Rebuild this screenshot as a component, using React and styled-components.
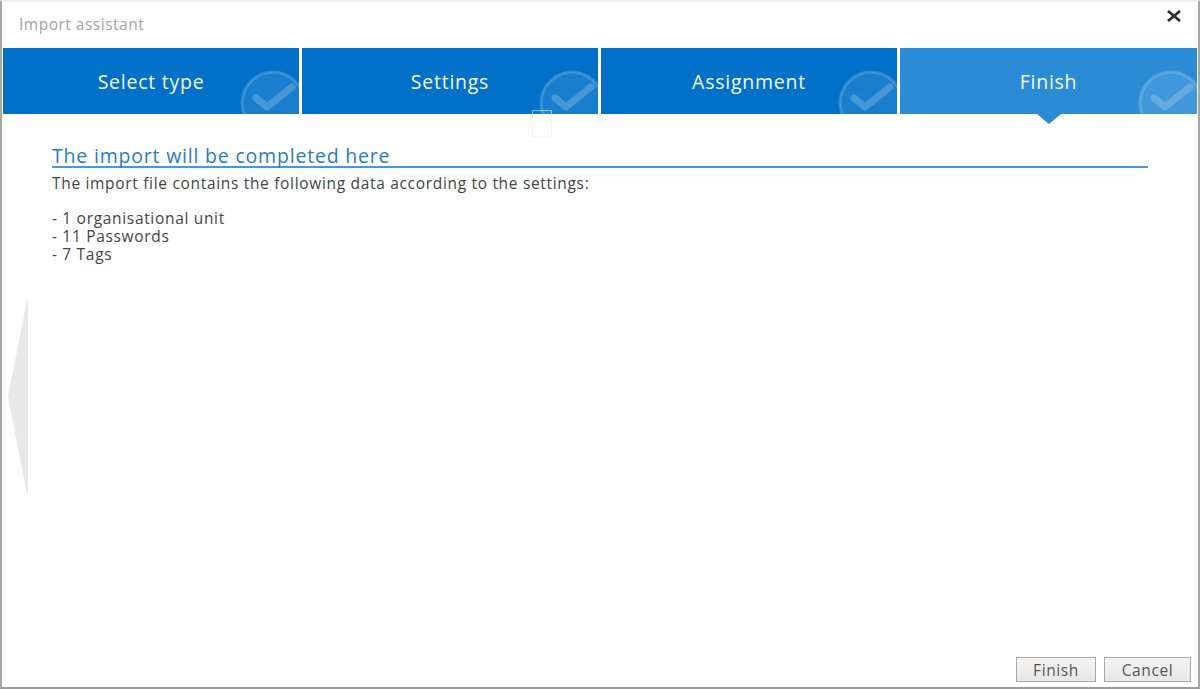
import React from "react";
import styled, { createGlobalStyle } from "styled-components";

const Global = createGlobalStyle`
  html, body { margin: 0; padding: 0; background: #fff; }
  body { font-family: "Open Sans", "Noto Sans", sans-serif; }
`;

const Window = styled.div`
  position: relative;
  box-sizing: border-box;
  width: 1200px;
  height: 689px;
  display: flex;
  flex-direction: column;
  overflow: hidden;
  background: #fff;
  border-top: 2px solid #f0f0f0;
  border-left: 2px solid #a6a6a6;
  border-right: 2px solid #a6a6a6;
  border-bottom: 2px solid #9a9a9a;
`;

const TitleBar = styled.div`
  height: 46px;
  flex: none;
  display: flex;
  align-items: flex-start;
  justify-content: space-between;
  padding: 13px 16px 0 17px;
  box-sizing: border-box;
`;

const Title = styled.div`
  font-size: 15.5px;
  line-height: 18px;
  letter-spacing: 0.5px;
  color: #a3a3a3;
`;

const Close = styled.svg`
  width: 16px;
  height: 12px;
  margin-top: -5px;
`;

const Steps = styled.div`
  flex: none;
  height: 66px;
  display: grid;
  grid-template-columns: repeat(3, 296px) 1fr;
  gap: 3px;
  margin: 0 1px 0 1px;
`;

const Step = styled.div`
  position: relative;
  background: ${(p) => (p.$active ? "#2b8cd5" : "#0070c9")};
  color: #f4f9fd;
  display: flex;
  align-items: center;
  justify-content: center;
  font-size: 19.5px;
  letter-spacing: 0.75px;
`;

const StepClip = styled.div`
  position: absolute;
  inset: 0;
  overflow: hidden;
`;

const Label = styled.span`
  position: relative;
`;

const Badge = styled.svg`
  position: absolute;
  right: -7px;
  top: 22px;
  width: 66px;
  height: 66px;
`;

const Pointer = styled.div`
  position: absolute;
  left: 50%;
  bottom: -10px;
  margin-left: -12px;
  width: 0;
  height: 0;
  border-left: 12px solid transparent;
  border-right: 12px solid transparent;
  border-top: 10px solid #2b8cd5;
`;

const Ghost = styled.div`
  position: absolute;
  left: 530px;
  top: 108px;
  width: 20px;
  height: 27px;
  box-sizing: border-box;
  border: 1px solid rgba(235, 235, 235, 0.6);
  border-radius: 1px;
  background: rgba(255, 255, 255, 0.06);
`;

const Content = styled.div`
  flex: 1;
  padding: 32px 50px 0;
`;

const Heading = styled.h2`
  margin: 0 0 6px;
  box-sizing: content-box;
  font-size: 19.5px;
  font-weight: 400;
  line-height: 20px;
  height: 20px;
  letter-spacing: 0.8px;
  color: #2a7cc4;
  border-bottom: 2px solid #3f9bdc;
`;

const Text = styled.div`
  font-size: 15.5px;
  line-height: 18px;
  letter-spacing: 0.68px;
  color: #444;
`;

const Blank = styled.div`
  height: 17px;
`;

const Footer = styled.div`
  flex: none;
  display: flex;
  justify-content: flex-end;
  gap: 8px;
  padding: 0 7px 5px 0;
`;

const Button = styled.button`
  box-sizing: border-box;
  width: ${(p) => p.$width}px;
  height: 25px;
  padding: 2px 0 0;
  font: 400 15.5px/1 "Open Sans", "Noto Sans", sans-serif;
  letter-spacing: 0.6px;
  color: #555;
  background: linear-gradient(#f3f3f3, #e8e8e8);
  border: 1px solid #a8a8a8;
`;

const SideArrow = styled.svg`
  position: absolute;
  left: 6px;
  top: 298px;
  width: 20px;
  height: 194px;
`;

const CheckBadge = () => (
  <Badge viewBox="0 0 66 66">
    <circle cx="33" cy="33" r="31" fill="rgba(255,255,255,0.1)" stroke="rgba(255,255,255,0.18)" strokeWidth="3" />
    <path d="M16 28 L27 37 L52 17" fill="none" stroke="rgba(255,255,255,0.2)" strokeWidth="7" strokeLinecap="round" strokeLinejoin="round" />
  </Badge>
);

const steps = ["Select type", "Settings", "Assignment", "Finish"];

export default function App() {
  return (
    <Window>
      <Global />
      <TitleBar>
        <Title>Import assistant</Title>
        <Close viewBox="0 0 16 12">
          <path d="M2 1 L14 11 M14 1 L2 11" stroke="#2f2f2f" strokeWidth="2.8" fill="none" />
        </Close>
      </TitleBar>
      <Steps>
        {steps.map((s, i) => (
          <Step key={s} $active={i === 3}>
            <StepClip>
              <CheckBadge />
            </StepClip>
            <Label>{s}</Label>
            {i === 3 && <Pointer />}
          </Step>
        ))}
      </Steps>
      <Ghost />
      <Content>
        <Heading>The import will be completed here</Heading>
        <Text>The import file contains the following data according to the settings:</Text>
        <Blank />
        <Text>- 1 organisational unit</Text>
        <Text>- 11 Passwords</Text>
        <Text>- 7 Tags</Text>
      </Content>
      <Footer>
        <Button $width={80}>Finish</Button>
        <Button $width={87}>Cancel</Button>
      </Footer>
      <SideArrow viewBox="0 0 20 194">
        <path d="M19 0 L20 0 L20 194 L19 194 L0 97 Z" fill="#e8e8e8" />
      </SideArrow>
    </Window>
  );
}
